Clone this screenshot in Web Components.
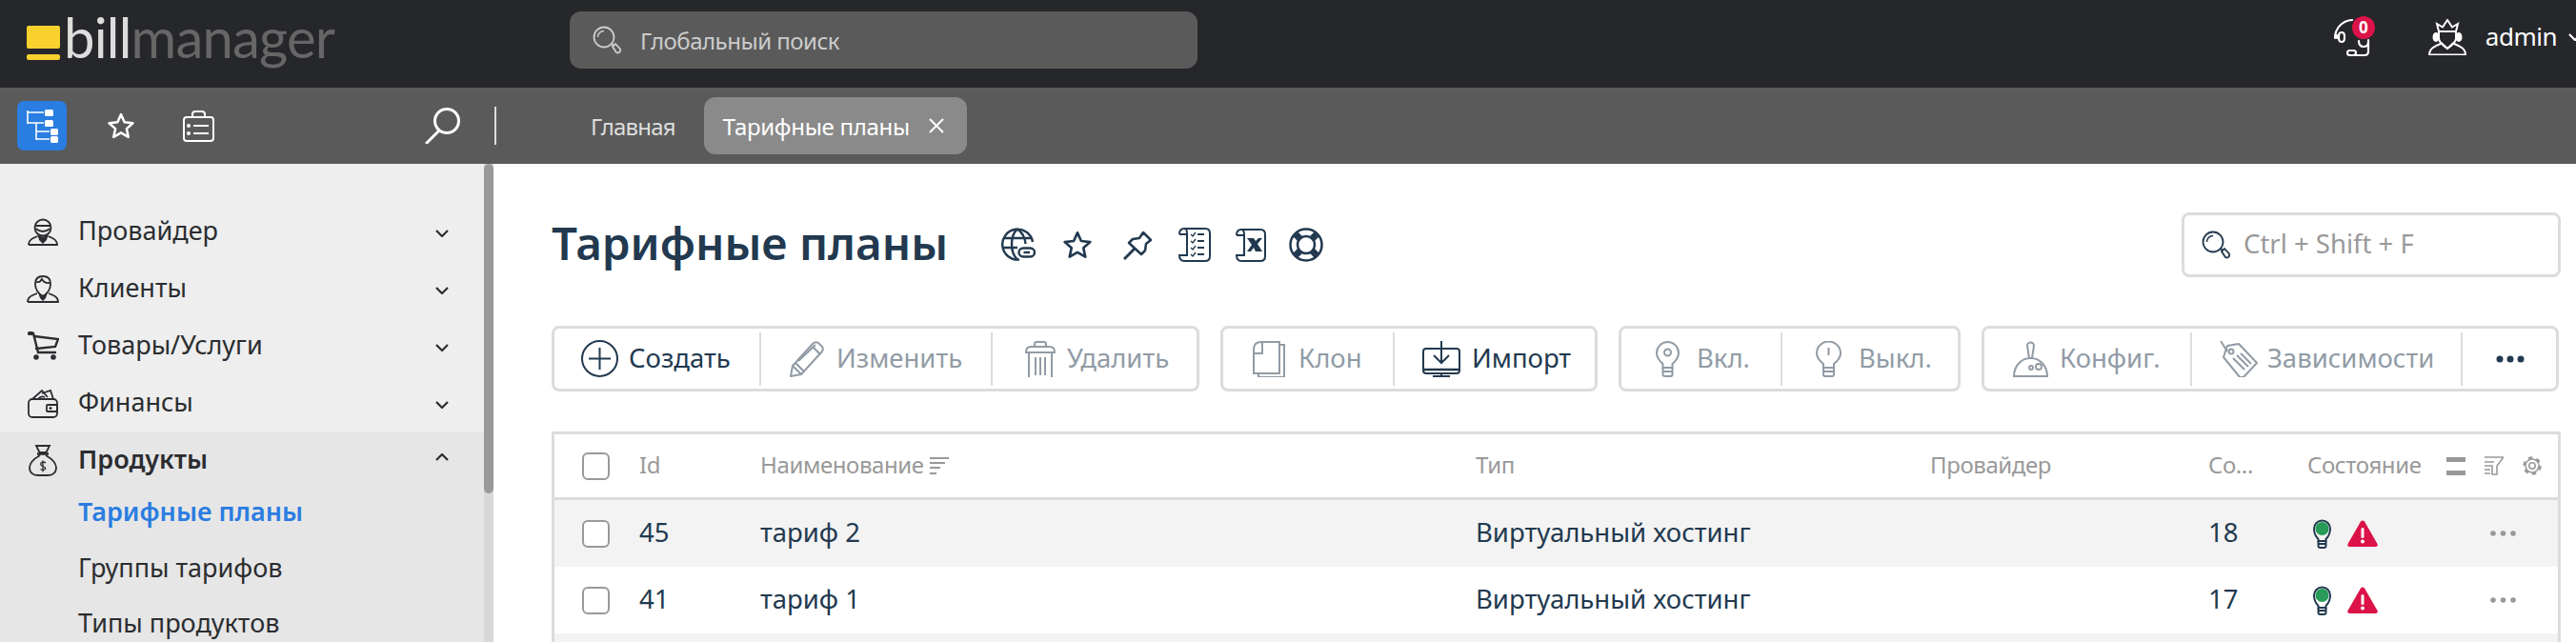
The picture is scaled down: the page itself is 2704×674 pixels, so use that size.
<!DOCTYPE html>
<html lang="ru">
<head>
<meta charset="utf-8">
<title>BILLmanager</title>
<style>
  html, body { margin: 0; height: 100%; overflow: hidden; }
  body {
    display: flex;
    flex-direction: column;
    width: 2704px;
    height: 674px;
    background: #fff;
    font-family: "Noto Sans", "Liberation Sans", sans-serif;
    color: #22394f;
  }
</style>
</head>
<body>
<bm-topbar></bm-topbar>
<bm-tabbar></bm-tabbar>
<bm-layout>
  <bm-sidebar slot="side">
    <bm-nav-item icon="provider" iw="32" ih="29" chevron="down">Провайдер</bm-nav-item>
    <bm-nav-item icon="client" iw="34" ih="29" chevron="down">Клиенты</bm-nav-item>
    <bm-nav-item icon="cart" iw="33" ih="30" chevron="down">Товары/Услуги</bm-nav-item>
    <bm-nav-item icon="wallet" iw="32" ih="31" chevron="down">Финансы</bm-nav-item>
    <bm-nav-group>
      <bm-nav-item icon="bag" iw="30" ih="33" chevron="up" open>Продукты</bm-nav-item>
      <bm-nav-sub active>Тарифные планы</bm-nav-sub>
      <bm-nav-sub>Группы тарифов</bm-nav-sub>
      <bm-nav-sub>Типы продуктов</bm-nav-sub>
    </bm-nav-group>
  </bm-sidebar>
  <bm-page slot="main" heading="Тарифные планы">
    <bm-tool-group>
      <bm-tool-button icon="plus" iw="39" ih="39" active width="215" pad="28" gap="11">Создать</bm-tool-button>
      <bm-tool-button icon="pencil" iw="37" ih="38" width="243" pad="30" gap="12">Изменить</bm-tool-button>
      <bm-tool-button icon="trash" iw="32" ih="38" width="216" pad="34" gap="12">Удалить</bm-tool-button>
    </bm-tool-group>
    <bm-tool-group>
      <bm-tool-button icon="doc" iw="34" ih="38" width="178" pad="31" gap="14">Клон</bm-tool-button>
      <bm-tool-button icon="import" iw="40" ih="38" active width="212" pad="29" gap="12">Импорт</bm-tool-button>
    </bm-tool-group>
    <bm-tool-group>
      <bm-tool-button icon="bulbOn" iw="25" ih="38" width="167" pad="36" gap="18">Вкл.</bm-tool-button>
      <bm-tool-button icon="bulbOff" iw="27" ih="38" width="186" pad="35" gap="18">Выкл.</bm-tool-button>
    </bm-tool-group>
    <bm-tool-group>
      <bm-tool-button icon="joystick" iw="37" ih="38" width="216" pad="30" gap="12">Конфиг.</bm-tool-button>
      <bm-tool-button icon="tag" iw="40" ih="38" width="284" pad="29" gap="10">Зависимости</bm-tool-button>
      <bm-tool-button icon="dots" iw="30" ih="8" active width="100" pad="35" gap="0"></bm-tool-button>
    </bm-tool-group>
    <bm-table slot="table"></bm-table>
  </bm-page>
</bm-layout>

<script>
// all pictograms live here, drawn in the pixel size of the box they take
const ICONS = {
  tree: ['0 0 52 52', `<g stroke-width="1.600"><path d="M11 10V24M11 12H28M11 23H28M20 23V41M20 32H34M20 40H34"/></g>
    <g fill="currentColor" stroke="none"><rect x="29" y="9" width="9" height="7" rx="1.5"/><rect x="29" y="20" width="9" height="7" rx="1.5"/><rect x="35" y="29" width="8" height="7" rx="1.5"/><rect x="35" y="37" width="8" height="7" rx="1.5"/></g>`],
  star: ['0 0 24 24', `<path stroke-width="2" stroke-linejoin="round" d="M12 2.5L14.9 9 22 9.8 16.7 14.5 18.2 21.5 12 17.9 5.8 21.5 7.3 14.5 2 9.8 9.1 9Z"/>`],
  briefcase: ['0 0 33 33', `<g stroke-width="2"><rect x="1" y="7" width="31" height="25" rx="3"/><path d="M10 7V4Q10 1 13 1H20Q23 1 23 4V7"/><path d="M11 16H27M11 24H27"/></g><circle cx="6" cy="16" r="2" fill="currentColor" stroke="none"/><circle cx="6" cy="24" r="2" fill="currentColor" stroke="none"/>`],
  magnifier: ['0 0 37 38', `<circle cx="23" cy="14" r="12.5" stroke-width="3"/><path stroke-width="3" stroke-linecap="round" d="M15 24L2 37"/>`],
  loupe: ['0 0 30 30', `<circle cx="12" cy="12" r="10.5" stroke-width="1.8"/><path stroke-width="1.5" d="M5.5 12A6.5 6.5 0 0 1 12 5.5"/><path stroke-width="1.8" d="M20 19L22 21M21 22L24 19L29 24.5Q29.5 27 28 28Q26.5 29 25 28Z"/>`],
  headset: ['0 0 40 40', `<g stroke-width="2.2" stroke-linecap="round"><path d="M2 20C2 10 9 2 20 1"/><path d="M4 20V17M9 24Q6 24 6 20V18Q6 14 9 14Q12 14 12 18V20Q12 24 9 24Z"/><path d="M27 23Q27 29 32 29Q37 29 37 24M37 22V34Q37 38 33 38H24"/><rect x="15" y="33" width="9" height="5" rx="2.5"/></g>`],
  queen: ['0 0 40 38', `<g stroke-width="2"><path d="M11 13L9 5 15 8.500 20 1 25 8.500 31 5 29 13Z"/><path d="M11 14V20C11 25 16 28 20 31C24 28 29 25 29 20V14"/><path d="M1 37.500C1 30 8 28 14 25.500L20 31 26 25.500C32 28 39 30 39 37.500Z"/></g><g fill="currentColor" stroke="none"><ellipse cx="8" cy="19" rx="3.500" ry="5"/><ellipse cx="32" cy="19" rx="3.500" ry="5"/></g>`],
  provider: ['0 0 32 29', `<g stroke-width="1.8"><circle cx="16" cy="10" r="8.500"/><path d="M8 8H24M8.500 11Q16 17 23.500 11"/><path d="M1 28H31C31 23 27 21 21.500 19M1 28C1 23 5 21 10.500 19"/></g><path fill="currentColor" stroke="none" d="M10 16Q16 23 22 16L20 23 16 27 12 23Z"/>`],
  client: ['0 0 34 29', `<g stroke-width="1.800"><path d="M9 9C9 3 13 1 17 1C21 1 25 3 25 9C25 14 22 19 17 22C12 19 9 14 9 9Z"/><path d="M10 7Q14 8 16 4Q19 9 24 8"/><path d="M1 28H33C33 23 29 21 23 19M1 28C1 23 5 21 11 19"/></g><path fill="currentColor" stroke="none" d="M12 18Q17 24 22 18L20 24 17 27 14 24Z"/>`],
  cart: ['0 0 33 30', `<g stroke-width="2.400" stroke-linecap="round"><path d="M2 2H6L11 22H29"/><path d="M7 5L32 8 29 16 9 18"/></g><circle cx="9" cy="27" r="2.800" fill="currentColor" stroke="none"/><circle cx="27" cy="27" r="2.800" fill="currentColor" stroke="none"/><rect x="0" y="0" width="6" height="4" rx="1.500" fill="currentColor" stroke="none"/>`],
  wallet: ['0 0 32 31', `<g stroke-width="1.800"><rect x="1" y="11" width="30" height="19" rx="4"/><path d="M5 11L15 2 21 9"/><path d="M15 5L24 2 27 11"/><path d="M11 11Q14 7 18 9"/><rect x="20" y="17" width="11" height="7" rx="1"/></g><circle cx="24" cy="20.500" r="1.500" fill="currentColor" stroke="none"/>`],
  bag: ['0 0 30 33', `<g stroke-width="1.800"><path d="M8 1H22L18.500 8H11.500Z"/><path d="M9 9.500H21" stroke-width="2.600"/><path d="M12 11C5 15 1 19 1 24C1 30 6 32 10 32H20C24 32 29 30 29 24C29 19 25 15 18 11"/><path stroke-width="1.300" d="M18 19Q15.500 17 13 19Q12 21.500 15 22.500Q18 23.500 17.500 25.500Q15 27.500 12.500 25.500M15 16.500V28.500"/></g>`],
  plus: ['0 0 39 39', `<circle cx="19.500" cy="19.500" r="18.500" stroke-width="2"/><path stroke-width="2" d="M19.500 8V31M8 19.500H31"/>`],
  pencil: ['0 0 37 38', `<g stroke-width="2" stroke-linejoin="round"><path d="M1 37L3 26 24 3Q27 0 30 2L34 6Q36 9 33 12L12 35Z"/><path d="M3 26L12 35M6 23L15 32M24 6L32 14M9 21L27 4"/></g>`],
  trash: ['0 0 32 38', `<g stroke-width="2"><path d="M1 12Q1 6 6 6H26Q31 6 31 12Z"/><rect x="10" y="1" width="12" height="5" rx="2"/><path d="M4 12V38M28 12V38M11 17V36M16 17V36M21 17V36"/></g>`],
  doc: ['0 0 34 38', `<g stroke-width="2"><path d="M28 4H33V38H6V34"/><path d="M9 1H28V34H1V9Q1 1 9 1Z"/><path d="M1 13H10V1"/></g>`],
  import: ['0 0 40 38', `<g stroke-width="2"><rect x="1" y="8" width="38" height="26" rx="3"/><path stroke-width="2.500" d="M1 30H39"/><path d="M20 34V37M11 37H29"/><path d="M20 0V23M12 15L20 23 28 15"/></g>`],
  bulbOn: ['0 0 25 38', `<g stroke-width="2"><path d="M7.500 24C3 20 1 17 1 12.500A11.500 11.500 0 0 1 24 12.500C24 17 22 20 17.500 24V28H7.500Z"/><path d="M7.500 28V35Q7.500 37 9.500 37H15.500Q17.500 37 17.500 35V28M7.500 32H17.500"/><circle cx="12.500" cy="12" r="3.500"/></g>`],
  bulbOff: ['0 0 27 38', `<g stroke-width="2"><path d="M8 24C3 20 1 17 1 13A12.500 12.500 0 0 1 26 13C26 17 24 20 19 24V28H8Z"/><path d="M8 28V35Q8 37 10 37H17Q19 37 19 35V28M8 32H19"/><path d="M13.500 7V15"/></g>`],
  joystick: ['0 0 37 38', `<g stroke-width="2"><path d="M17 18L15 5A3.500 3.500 0 0 1 22 5L20 18Z"/><path d="M1 37C1 27 8 18 18.500 18C29 18 36 27 36 37Z"/><circle cx="19" cy="28" r="2"/><circle cx="27" cy="27" r="3"/></g>`],
  tag: ['0 0 40 38', `<g stroke-width="2" stroke-linejoin="round"><path d="M1 0L8 11"/><path d="M4 17L8 5 20 3 39 23 25 38H21Z"/><circle cx="12" cy="11" r="2.500"/><path d="M14 18L26 30M18 15L30 27M22 13L33 24"/></g>`],
  dots: ['0 0 30 8', `<g fill="currentColor" stroke="none"><circle cx="4" cy="4" r="3.500"/><circle cx="15" cy="4" r="3.500"/><circle cx="26" cy="4" r="3.500"/></g>`],
  globe: ['0 0 36 36', `<g stroke-width="2.400"><path d="M19 33.500A16 16 0 1 1 33 15"/><path d="M17 1.500C9 8 9 26 17 33.500M17 1.500C22 5 25 10 25.500 17M2 11H32M1.500 21H17"/><rect x="18.500" y="21.500" width="16.500" height="9" rx="4.500" fill="#fff"/><path d="M23.500 26H30"/></g>`],
  pin: ['0 0 31 31', `<g stroke-width="2.500" stroke-linejoin="round"><path d="M21 2L29 10 24 14 23 21 19 25 6 13 10 9 17 8Z"/><path d="M12 19L1 30" stroke-width="3"/></g>`],
  scrollList: ['0 0 34 36', `<g stroke-width="2"><path d="M1 7Q1 1 6 1H28Q33 1 33 6V30Q33 35 28 35H6Q1 35 1 29H9V6Q9 1 6 1"/><path d="M1 7H9M20 7H27M20 14H27M20 21H27M20 28H27"/><path stroke-width="1.300" d="M13 7L15 9 18 5M13 14L15 16 18 12M13 21L15 23 18 19M13 28L15 30 18 26"/></g>`],
  scrollX: ['0 0 32 35', `<g stroke-width="2"><path d="M1 7Q1 1 6 1H26Q31 1 31 6V29Q31 34 26 34H6Q1 34 1 28H9V6Q9 1 6 1"/><path d="M1 7H9"/></g><path fill="currentColor" stroke="none" d="M12 10H19L21 13 24 10H28L23 16 28 24H21L19 20 16 24H12L17 17Z"/>`],
  buoy: ['0 0 36 36', `<g stroke-width="2.500"><circle cx="18" cy="18" r="16.500"/><circle cx="18" cy="18" r="9"/></g><path stroke-width="7" d="M7 7L11.500 11.500M29 7L24.500 11.500M7 29L11.500 24.500M29 29L24.500 24.500"/>`],
  sort: ['0 0 20 20', `<path stroke-width="2" d="M0 2H20M0 7H16M0 12H11M0 18H7"/>`],
  rows: ['0 0 20 19', `<g fill="currentColor" stroke="none"><rect width="20" height="5"/><rect y="14" width="20" height="5"/></g>`],
  filter: ['0 0 20 20', `<path stroke-width="1.600" d="M0 1H20L13 10V19H8V9M0 6H10M0 10H7M0 14H6M0 18H6"/>`],
  gear: ['0 0 20 20', `<circle cx="10" cy="10" r="3.200" stroke-width="1.600"/><circle cx="10" cy="10" r="7" stroke-width="1.600"/><circle cx="10" cy="10" r="8.500" stroke-width="2.500" stroke-dasharray="4.500 4.400"/>`],
  bulbGreen: ['0 0 19 31', `<path fill="#279b57" stroke="none" d="M9.500 3A7 7 0 0 1 9.500 17A7 7 0 0 1 9.500 3Z"/><g stroke-width="2"><path d="M5.500 21C2.500 18 1 15 1 10A8.500 8.500 0 0 1 18 10C18 15 16.500 18 13.500 21V23H5.500Z"/><path d="M5.500 23V28Q5.500 30 7.500 30H11.500Q13.500 30 13.500 28V23M5.500 26H13.500"/></g>`],
  alert: ['0 0 32 28', `<path fill="#dc1348" stroke="none" d="M14 1.500Q16 -0.500 18 1.500L31.500 25Q32.500 28 29.500 28H2.500Q-0.500 28 0.500 25Z"/><g fill="#fff" stroke="none"><rect x="14.500" y="8" width="3" height="11" rx="1.500"/><circle cx="16" cy="22.500" r="2"/></g>`],
  rowDots: ['0 0 27 6', `<g fill="currentColor" stroke="none"><circle cx="3" cy="3" r="2.800"/><circle cx="13.500" cy="3" r="2.800"/><circle cx="24" cy="3" r="2.800"/></g>`],
  close: ['0 0 16 16', `<path stroke-width="2" d="M1 1L15 15M15 1L1 15"/>`],
  chevDown: ['0 0 14 8', `<path stroke-width="2.200" d="M1 1L7 7 13 1"/>`],
  chevUp: ['0 0 14 8', `<path stroke-width="2.200" d="M1 7L7 1 13 7"/>`]
};

class BmIcon extends HTMLElement {
  constructor() {
    super();
    this.shadow = this.attachShadow({ mode: "open" });
  }
  connectedCallback() {
    const [viewBox, body] = ICONS[this.getAttribute("name")];
    const w = this.getAttribute("w") || 24;
    const h = this.getAttribute("h") || w;
    this.shadow.innerHTML = `
    <style>
      :host { display: inline-flex; flex: none; width: ${w}px; height: ${h}px; }
      svg { display: block; width: 100%; height: 100%; fill: none; stroke: currentColor; overflow: hidden; }
    </style>
    <svg viewBox="${viewBox}" preserveAspectRatio="none">${body}</svg>`;
  }
}

class BmTopbar extends HTMLElement {
  constructor() {
    super();
    this.shadow = this.attachShadow({ mode: "open" });
  }
  connectedCallback() {
    this.shadow.innerHTML = `
    <style>
      :host { display: flex; flex: none; align-items: flex-start; height: 92px; background: #26272b; color: #fff; overflow: hidden; }
      .logo { display: flex; align-items: flex-start; width: 598px; padding: 0 0 0 28px; box-sizing: border-box; flex: none; }
      .mark { display: flex; flex-direction: column; gap: 6px; width: 35px; margin-top: 27px; margin-right: 4px; }
      .mark i { display: block; background: #f9d12f; border-radius: 2px; }
      .mark i:first-child { height: 24px; }
      .mark i:last-child { height: 6px; }
      .word { font-family: Lato, sans-serif; font-size: 58px; line-height: 70px; margin-top: 4px; letter-spacing: -0.8px; color: #666; }
      .word b { font-weight: 400; color: #ddd; }
      .search { display: flex; align-items: center; width: 659px; height: 60px; margin-top: 12px; background: #5a5a5a; border-radius: 12px; color: #ccc; font-size: 24px; letter-spacing: -0.5px; box-sizing: border-box; padding-left: 24px; flex: none; }
      .search span { margin-left: 20px; }
      .right { display: flex; margin-left: auto; align-items: flex-start; }
      .help { position: relative; margin-top: 20px; margin-right: 60px; }
      .badge { position: absolute; left: 20px; top: -3px; width: 24px; height: 24px; border-radius: 50%; background: #dc1348; font-size: 17px; font-weight: 700; line-height: 24px; text-align: center; }
      .user { display: flex; align-items: flex-start; margin-top: 20px; font-size: 26px; letter-spacing: -0.5px; }
      .user span { margin-left: 20px; line-height: 36px; }
      .user bm-icon:last-child { margin: 15px -6px 0 12px; }
    </style>
    <div class="logo">
      <div class="mark"><i></i><i></i></div>
      <div class="word"><b>bill</b>manager</div>
    </div>
    <div class="search"><bm-icon name="loupe" w="30" h="30"></bm-icon><span>Глобальный поиск</span></div>
    <div class="right">
      <div class="help"><bm-icon name="headset" w="40" h="40"></bm-icon><div class="badge">0</div></div>
      <div class="user"><bm-icon name="queen" w="40" h="38"></bm-icon><span>admin</span><bm-icon name="chevDown" w="14" h="8"></bm-icon></div>
    </div>`;
  }
}

class BmTabbar extends HTMLElement {
  constructor() {
    super();
    this.shadow = this.attachShadow({ mode: "open" });
  }
  connectedCallback() {
    this.shadow.innerHTML = `
    <style>
      :host { display: flex; flex: none; align-items: center; height: 80px; background: #5a5a5a; color: #fff; font-size: 24px; }
      .tools { display: flex; align-items: center; width: 519px; box-sizing: border-box; padding-left: 18px; flex: none; }
      .tree { display: flex; width: 52px; height: 52px; background: #2a7de1; border-radius: 7px; }
      .tools .fav { margin-left: 42px; }
      .tools .bag { margin-left: 50px; }
      .tools .find { margin-left: auto; margin-right: 36px; }
      .sep { width: 2px; height: 40px; background: #ddd; flex: none; }
      .home { margin-left: 99px; color: #ddd; letter-spacing: -0.8px; }
      .tab { display: flex; align-items: center; height: 60px; width: 276px; margin-left: 30px; padding-left: 20px; box-sizing: border-box; background: #8a8a8a; border-radius: 12px; letter-spacing: -0.3px; }
      .tab bm-icon { margin-left: 20px; }
    </style>
    <div class="tools">
      <div class="tree"><bm-icon name="tree" w="52" h="52"></bm-icon></div>
      <bm-icon class="fav" name="star" w="30" h="30"></bm-icon>
      <bm-icon class="bag" name="briefcase" w="33" h="33"></bm-icon>
      <bm-icon class="find" name="magnifier" w="37" h="38"></bm-icon>
    </div>
    <div class="sep"></div>
    <div class="home">Главная</div>
    <div class="tab"><span>Тарифные планы</span><bm-icon name="close" w="16" h="16"></bm-icon></div>`;
  }
}

class BmLayout extends HTMLElement {
  constructor() {
    super();
    this.shadow = this.attachShadow({ mode: "open" });
  }
  connectedCallback() {
    this.shadow.innerHTML = `
    <style>
      :host { display: flex; flex: 1 1 auto; min-height: 0; overflow: hidden; }
    </style>
    <slot name="side"></slot>
    <slot name="main"></slot>`;
  }
}

class BmSidebar extends HTMLElement {
  constructor() {
    super();
    this.shadow = this.attachShadow({ mode: "open" });
  }
  connectedCallback() {
    this.shadow.innerHTML = `
    <style>
      :host { display: flex; flex: none; width: 518px; background: #eee; color: #2b2d30; font-size: 27px; overflow: hidden; }
      nav { flex: 1 1 auto; padding-top: 41px; }
      .track { flex: none; width: 10px; background: #d8d8d8; }
      .thumb { height: 346px; background: #999; border-radius: 5px; }
    </style>
    <nav><slot></slot></nav>
    <div class="track"><div class="thumb"></div></div>`;
  }
}

class BmNavItem extends HTMLElement {
  constructor() {
    super();
    this.shadow = this.attachShadow({ mode: "open" });
  }
  connectedCallback() {
    const open = this.hasAttribute("open");
    const chevron = this.getAttribute("chevron") === "up" ? "chevUp" : "chevDown";
    this.shadow.innerHTML = `
    <style>
      :host { display: flex; align-items: center; height: 60px; padding-right: 37px; font-weight: ${open ? 600 : 400}; }
      .ic { display: flex; justify-content: center; width: 34px; margin-left: 28px; margin-right: 20px; }
      .lbl { flex: 1 1 auto; margin-bottom: 3px; }
      .chev { display: flex; margin-top: ${open ? -6 : 4}px; }
    </style>
    <span class="ic"><bm-icon name="${this.getAttribute("icon")}" w="${this.getAttribute("iw")}" h="${this.getAttribute("ih")}"></bm-icon></span>
    <span class="lbl"><slot></slot></span>
    <span class="chev"><bm-icon name="${chevron}" w="14" h="8"></bm-icon></span>`;
  }
}

class BmNavGroup extends HTMLElement {
  constructor() {
    super();
    this.shadow = this.attachShadow({ mode: "open" });
  }
  connectedCallback() {
    this.shadow.innerHTML = `
    <style>
      :host { display: block; background: #e6e6e6; padding-bottom: 30px; }
    </style>
    <slot></slot>`;
  }
}

class BmNavSub extends HTMLElement {
  constructor() {
    super();
    this.shadow = this.attachShadow({ mode: "open" });
  }
  connectedCallback() {
    const active = this.hasAttribute("active");
    this.shadow.innerHTML = `
    <style>
      :host { display: flex; align-items: center; height: 58.5px; padding-left: 82px; color: ${active ? "#2a7de1" : "inherit"}; font-weight: ${active ? 600 : 400}; }
      :host([active]) { margin-top: -4px; }
      span { margin-bottom: 3px; }
    </style>
    <span><slot></slot></span>`;
  }
}

class BmPage extends HTMLElement {
  constructor() {
    super();
    this.shadow = this.attachShadow({ mode: "open" });
  }
  connectedCallback() {
    const icons = [["globe", 36, 36, 0], ["star", 32, 32, 28], ["pin", 31, 31, 32], ["scrollList", 34, 36, 27], ["scrollX", 32, 35, 26], ["buoy", 36, 36, 24]];
    this.shadow.innerHTML = `
    <style>
      :host { display: block; flex: 1 1 auto; min-width: 0; padding: 49px 16px 0 61px; color: #22394f; }
      .head { display: flex; align-items: center; height: 72px; margin-bottom: 49px; }
      h1 { margin: 0 0 4px; flex: none; width: 417px; font-size: 47.600px; font-weight: 600; line-height: 68px; white-space: nowrap; }
      .actions { display: flex; align-items: center; margin-left: 55px; }
      .find { display: flex; align-items: center; width: 398px; height: 68px; margin-left: auto; box-sizing: border-box; padding-left: 18px; border: 3px solid #dcdcdc; border-radius: 8px; color: #999; font-size: 27.500px; }
      .find span { margin-bottom: 3px; }
      .find bm-icon { color: #22394f; margin-right: 14px; }
      .toolbar { display: flex; gap: 22px; margin-bottom: 42px; }
    </style>
    <div class="head">
      <h1>${this.getAttribute("heading")}</h1>
      <div class="actions">${icons.map(([n, w, h, m]) => `<bm-icon name="${n}" w="${w}" h="${h}" style="margin-left:${m}px"></bm-icon>`).join("")}</div>
      <div class="find"><bm-icon name="loupe" w="30" h="30"></bm-icon><span>Ctrl + Shift + F</span></div>
    </div>
    <div class="toolbar"><slot></slot></div>
    <slot name="table"></slot>`;
  }
}

class BmToolGroup extends HTMLElement {
  constructor() {
    super();
    this.shadow = this.attachShadow({ mode: "open" });
  }
  connectedCallback() {
    this.shadow.innerHTML = `
    <style>
      :host { display: flex; align-items: center; height: 69px; box-sizing: border-box; border: 3px solid #dcdcdc; border-radius: 8px; flex: none; }
    </style>
    <slot></slot>`;
  }
}

class BmToolButton extends HTMLElement {
  constructor() {
    super();
    this.shadow = this.attachShadow({ mode: "open" });
  }
  connectedCallback() {
    const active = this.hasAttribute("active");
    this.shadow.innerHTML = `
    <style>
      :host { display: flex; align-items: center; gap: ${this.getAttribute("gap")}px; box-sizing: border-box; width: ${this.getAttribute("width")}px; height: 56px; padding-left: ${this.getAttribute("pad")}px; font-size: 27.500px; color: ${active ? "#22394f" : "#919ba5"}; border-left: 2px solid #dcdcdc; white-space: nowrap; }
      :host(:first-child) { border-left: 0; }
      span { margin-bottom: 3px; }
    </style>
    <bm-icon name="${this.getAttribute("icon")}" w="${this.getAttribute("iw")}" h="${this.getAttribute("ih")}"></bm-icon>
    <span><slot></slot></span>`;
  }
}

class BmTable extends HTMLElement {
  constructor() {
    super();
    this.shadow = this.attachShadow({ mode: "open" });
  }
  connectedCallback() {
    const rows = [
      { id: 45, name: "тариф 2", type: "Виртуальный хостинг", count: 18 },
      { id: 41, name: "тариф 1", type: "Виртуальный хостинг", count: 17 },
      { id: "", name: "", type: "", count: "" }
    ];
    const box = `<i class="check"></i>`;
    this.shadow.innerHTML = `
    <style>
      :host { display: block; border: 3px solid #dcdcdc; border-bottom: 0; }
      .row { display: grid; grid-template-columns: 60px 127px 751px 477px 292px 104px 1fr; align-items: center; height: 70px; padding-left: 29px; font-size: 27.500px; color: #22394f; }
      .alt { background: #f3f3f3; }
      .head { height: 66px; border-bottom: 3px solid #dcdcdc; font-size: 24px; letter-spacing: -0.4px; color: #999; }
      .check { display: block; width: 29px; height: 29px; box-sizing: border-box; border: 2px solid #999; border-radius: 6px; background: #fff; }
      .cell { display: flex; align-items: center; white-space: nowrap; height: 100%; }
      .txt { margin-bottom: 3px; }
      .head .cell > bm-icon { margin-left: 6px; }
      .tools { padding-right: 17px; }
      .tools .txt { margin-right: auto; }
      .head .tools > bm-icon { margin-left: 20px; }
      .state bm-icon:first-child { margin-left: 6px; margin-right: 17px; }
      .state .more { color: #999; margin-left: auto; margin-right: 44px; }
    </style>
    <div class="row head">
      ${box}
      <div class="cell"><span class="txt">Id</span></div>
      <div class="cell"><span class="txt">Наименование</span><bm-icon name="sort" w="20" h="20"></bm-icon></div>
      <div class="cell"><span class="txt">Тип</span></div>
      <div class="cell"><span class="txt">Провайдер</span></div>
      <div class="cell"><span class="txt">Со...</span></div>
      <div class="cell tools"><span class="txt">Состояние</span><bm-icon name="rows" w="20" h="19"></bm-icon><bm-icon name="filter" w="20" h="20"></bm-icon><bm-icon name="gear" w="20" h="20"></bm-icon></div>
    </div>
    ${rows.map((r, i) => `
    <div class="row ${i % 2 === 0 ? "alt" : ""}">
      ${r.id === "" ? "" : `${box}
      <div class="cell"><span class="txt">${r.id}</span></div>
      <div class="cell"><span class="txt">${r.name}</span></div>
      <div class="cell"><span class="txt">${r.type}</span></div>
      <div class="cell"></div>
      <div class="cell"><span class="txt">${r.count}</span></div>
      <div class="cell state"><bm-icon name="bulbGreen" w="19" h="31"></bm-icon><bm-icon name="alert" w="32" h="28"></bm-icon><bm-icon class="more" name="rowDots" w="27" h="6"></bm-icon></div>`}
    </div>`).join("")}`;
  }
}

customElements.define("bm-icon", BmIcon);
customElements.define("bm-topbar", BmTopbar);
customElements.define("bm-tabbar", BmTabbar);
customElements.define("bm-layout", BmLayout);
customElements.define("bm-sidebar", BmSidebar);
customElements.define("bm-nav-item", BmNavItem);
customElements.define("bm-nav-group", BmNavGroup);
customElements.define("bm-nav-sub", BmNavSub);
customElements.define("bm-page", BmPage);
customElements.define("bm-tool-group", BmToolGroup);
customElements.define("bm-tool-button", BmToolButton);
customElements.define("bm-table", BmTable);
</script>
</body>
</html>
